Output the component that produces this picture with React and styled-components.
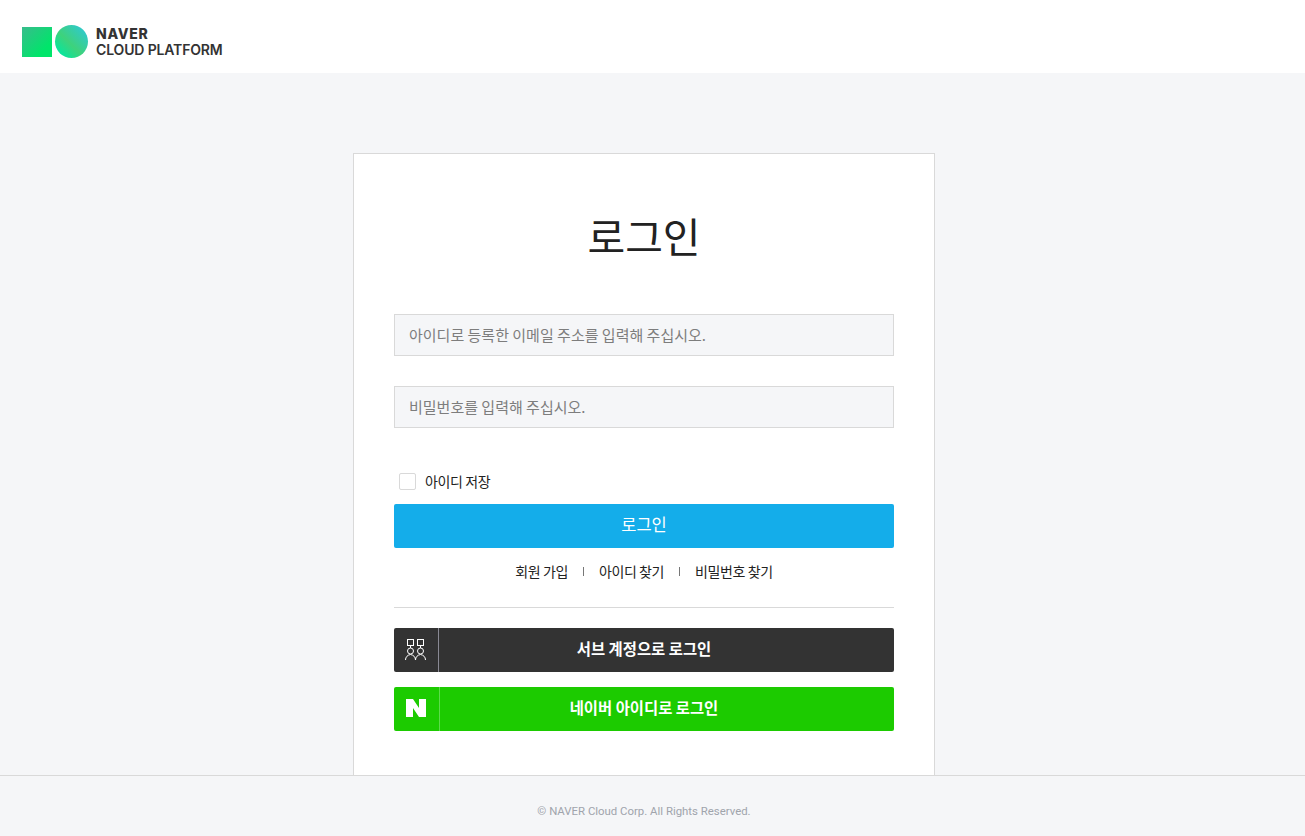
import styled, { createGlobalStyle } from "styled-components";

const GlobalStyle = createGlobalStyle`
  html, body {
    margin: 0;
    padding: 0;
    height: 100%;
    background: #f5f6f8;
  }
  body {
    font-family: "Roboto", "Noto Sans CJK KR", sans-serif;
    overflow: hidden;
  }
  * {
    box-sizing: border-box;
  }
`;

const Page = styled.div`
  height: 836px;
  display: flex;
  flex-direction: column;
  overflow: hidden;
`;

const Header = styled.header`
  height: 73px;
  flex: none;
  background: #fff;
  display: flex;
  align-items: center;
  padding: 10px 0 0 22px;
`;

const LogoSquare = styled.div`
  width: 30px;
  height: 30px;
  background: linear-gradient(135deg, #38bc8c 0%, #00e56a 75%);
`;

const LogoCircle = styled.div`
  width: 33px;
  height: 33px;
  border-radius: 50%;
  margin-left: 3px;
  background: linear-gradient(45deg, #00e8a0 10%, #3ed27c 45%, #2ec8d8 95%);
`;

const LogoText = styled.div`
  margin-left: 8px;
  padding-bottom: 1px;
  font-family: "Inter", sans-serif;
  color: #333;
  font-size: 14px;
  line-height: 15px;
  letter-spacing: -0.15px;
  font-weight: 600;
`;

const LogoStrong = styled.div`
  height: 16px;
  font-weight: 800;
  letter-spacing: 0.7px;
`;

const Main = styled.main`
  flex: 1;
  min-height: 0;
  display: flex;
  justify-content: center;
  padding: 80px 17px 0 0;
`;

const Card = styled.section`
  width: 582px;
  height: 622px;
  background: #fff;
  border: 1px solid #d9d9d9;
  border-bottom: none;
  padding: 0 40px;
  display: flex;
  flex-direction: column;
  font-family: "Noto Sans CJK KR", sans-serif;
`;

const Title = styled.h1`
  margin: 53px 0 0;
  height: 56px;
  font-size: 41px;
  line-height: 56px;
  font-weight: 400;
  text-align: center;
  color: #222;
`;

const Field = styled.div`
  height: 42px;
  margin-top: ${(p) => p.$top}px;
  background: #f5f6f8;
  border: 1px solid #d9d9d9;
  padding: 0 14px 2px;
  display: flex;
  align-items: center;
  font-size: 15px;
  color: #7d7d7d;
`;

const SaveRow = styled.label`
  margin-top: 45px;
  height: 17px;
  padding-left: 5px;
  display: flex;
  align-items: center;
  gap: 9px;
  font-size: 14px;
  letter-spacing: -0.4px;
  color: #222;
`;

const SaveText = styled.span`
  position: relative;
  top: -1px;
`;

const Check = styled.span`
  width: 17px;
  height: 17px;
  background: #fff;
  border: 1px solid #d9d9d9;
  border-radius: 2px;
`;

const SubmitButton = styled.button`
  margin-top: 14px;
  width: 500px;
  height: 44px;
  flex: none;
  border: none;
  border-radius: 2px;
  background: #14adea;
  color: #fff;
  font-size: 16.5px;
  font-family: inherit;
  padding: 0 0 4px;
`;

const LinkRow = styled.div`
  margin-top: 13px;
  height: 20px;
  display: flex;
  justify-content: center;
  align-items: center;
  font-size: 14px;
  letter-spacing: -0.4px;
  color: #222;
`;

const LinkSep = styled.span`
  width: 1px;
  height: 9px;
  background: #777;
  margin: 0 15px;
`;

const Divider = styled.hr`
  margin: 26px 0 20px;
  border: none;
  border-top: 1px solid #d9d9d9;
  width: 100%;
`;

const SocialButton = styled.button`
  width: 500px;
  height: 44px;
  flex: none;
  border: none;
  border-radius: 2px;
  padding: 0;
  margin-bottom: 15px;
  display: flex;
  align-items: stretch;
  background: ${(p) => p.$bg};
  color: #fff;
  font-size: 15.4px;
  font-weight: 700;
  font-family: inherit;
`;

const SocialIcon = styled.span`
  width: ${(p) => p.$width}px;
  flex: none;
  display: flex;
  align-items: center;
  justify-content: center;
  padding: 0 ${(p) => p.$nudge || 0}px 2px 0;
  border-right: 1px solid ${(p) => p.$line};
`;

const SocialLabel = styled.span`
  flex: 1;
  display: flex;
  align-items: center;
  justify-content: center;
  padding: 0 ${(p) => p.$inset}px 5px 0;
`;

const Footer = styled.footer`
  height: 61px;
  flex: none;
  border-top: 1px solid #d9d9d9;
  background: #f5f6f8;
  text-align: center;
  padding: 27px 17px 0 0;
  font-size: 11.4px;
  line-height: 16px;
  color: #a0a4ac;
`;

const SubAccountIcon = () => (
  <svg width="22" height="24" viewBox="0 0 22 24" fill="none" stroke="#fff" strokeWidth="1">
    <rect x="2.5" y="2.5" width="6" height="6" />
    <rect x="12.5" y="2.5" width="6" height="6" />
    <path d="M5.5 8.5v2.5M15.5 8.5v2.5" />
    <circle cx="5.5" cy="14" r="3" />
    <circle cx="15.5" cy="14" r="3" />
    <path d="M0.5 23c0-3 2-5 5-5.5 3 .5 5 2.5 5 5.5 0-3 2-5 5-5.5 3 .5 5 2.5 5 5.5" />
  </svg>
);

const NaverIcon = () => (
  <svg width="20" height="18" viewBox="0 0 20 18" fill="#fff">
    <path d="M0 0h7l6 8.9V0h7v18h-7L7 9.1V18H0z" />
  </svg>
);

export default function App() {
  return (
    <>
      <GlobalStyle />
      <Page>
        <Header>
          <LogoSquare />
          <LogoCircle />
          <LogoText>
            <LogoStrong>NAVER</LogoStrong>
            <div>CLOUD PLATFORM</div>
          </LogoText>
        </Header>
        <Main>
          <Card>
            <Title>로그인</Title>
            <Field $top={51}>아이디로 등록한 이메일 주소를 입력해 주십시오.</Field>
            <Field $top={30}>비밀번호를 입력해 주십시오.</Field>
            <SaveRow>
              <Check />
              <SaveText>아이디 저장</SaveText>
            </SaveRow>
            <SubmitButton>로그인</SubmitButton>
            <LinkRow>
              회원 가입
              <LinkSep />
              아이디 찾기
              <LinkSep />
              비밀번호 찾기
            </LinkRow>
            <Divider />
            <SocialButton $bg="#333">
              <SocialIcon $width={45} $line="#8a8a94">
                <SubAccountIcon />
              </SocialIcon>
              <SocialLabel $inset={45}>서브 계정으로 로그인</SocialLabel>
            </SocialButton>
            <SocialButton $bg="#1ccb00">
              <SocialIcon $width={46} $line="#5ddb4a" $nudge={1}>
                <NaverIcon />
              </SocialIcon>
              <SocialLabel $inset={46}>네이버 아이디로 로그인</SocialLabel>
            </SocialButton>
          </Card>
        </Main>
        <Footer>© NAVER Cloud Corp. All Rights Reserved.</Footer>
      </Page>
    </>
  );
}
